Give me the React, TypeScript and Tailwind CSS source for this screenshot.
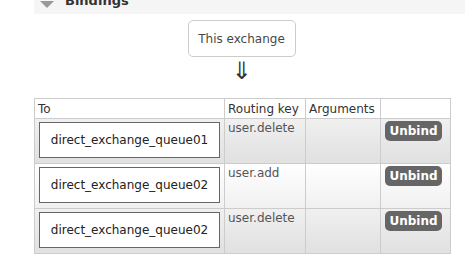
const rows = [
  { queue: "direct_exchange_queue01", key: "user.delete", alt: true },
  { queue: "direct_exchange_queue02", key: "user.add", alt: false },
  { queue: "direct_exchange_queue02", key: "user.delete", alt: true },
];

export default function App() {
  return (
    <div className="w-[465px] h-[262px] bg-white overflow-hidden text-[12px] text-[#484848] font-['DejaVu_Sans',Verdana,sans-serif]">
      <div className="ml-[34px] h-[14px] bg-[#f5f5f5] flex items-end overflow-hidden">
        <div className="flex items-end gap-[11px] pl-[6px] mb-[7px]">
          <span className="inline-block w-0 h-0 border-l-[7px] border-r-[7px] border-t-[7px] border-l-transparent border-r-transparent border-t-[#999] -mb-[1px]"></span>
          <span className="font-bold text-[13px] leading-[13px] text-[#333]">Bindings</span>
        </div>
      </div>

      <div className="flex flex-col items-center ml-[34px] w-[415px]">
        <div className="mt-[6px] w-[108px] h-[37px] border border-[#ccc] rounded-[5px] flex items-center justify-center text-[#484848]">
          This exchange
        </div>
        <div className="h-[26px] mt-[1px] text-[24px] leading-[26px] text-[#333]">⇓</div>
      </div>

      <table className="ml-[34px] mt-[14px] border-collapse w-[416px] table-fixed">
        <colgroup>
          <col className="w-[190px]" />
          <col className="w-[81px]" />
          <col className="w-[75px]" />
          <col className="w-[70px]" />
        </colgroup>
        <thead>
          <tr className="h-[20px] bg-white text-[#333]">
            <th className="border border-[#ccc] font-normal text-left px-[3px] py-0 leading-[18px]">To</th>
            <th className="border border-[#ccc] font-normal text-left px-[3px] py-0 leading-[18px]">Routing key</th>
            <th className="border border-[#ccc] font-normal text-left px-[3px] py-0 leading-[18px]">Arguments</th>
            <th className="border border-[#ccc]"></th>
          </tr>
        </thead>
        <tbody>
          {rows.map((r, i) => (
            <tr
              key={i}
              className={
                r.alt
                  ? "h-[45px] bg-gradient-to-b from-[#f0f0f0] to-[#e0e0e0]"
                  : "h-[45px] bg-gradient-to-b from-[#ffffff] to-[#f0f0f0]"
              }
            >
              <td className="border border-[#ccc] p-0 align-top">
                <div className="mt-[3px] ml-[4px] w-[181px] h-[36px] border border-[#666] bg-white flex items-center justify-center text-[#222]">
                  {r.queue}
                </div>
              </td>
              <td className="border border-[#ccc] px-[3px] pt-[1px] align-top text-[#555] leading-[16px]">{r.key}</td>
              <td className="border border-[#ccc] align-top"></td>
              <td className="border border-[#ccc] align-top">
                <button className="mt-[2px] ml-[4px] w-[57px] h-[20px] rounded-[5px] bg-[#666] text-white font-bold text-[12px] leading-[20px]">
                  Unbind
                </button>
              </td>
            </tr>
          ))}
        </tbody>
      </table>
    </div>
  );
}
